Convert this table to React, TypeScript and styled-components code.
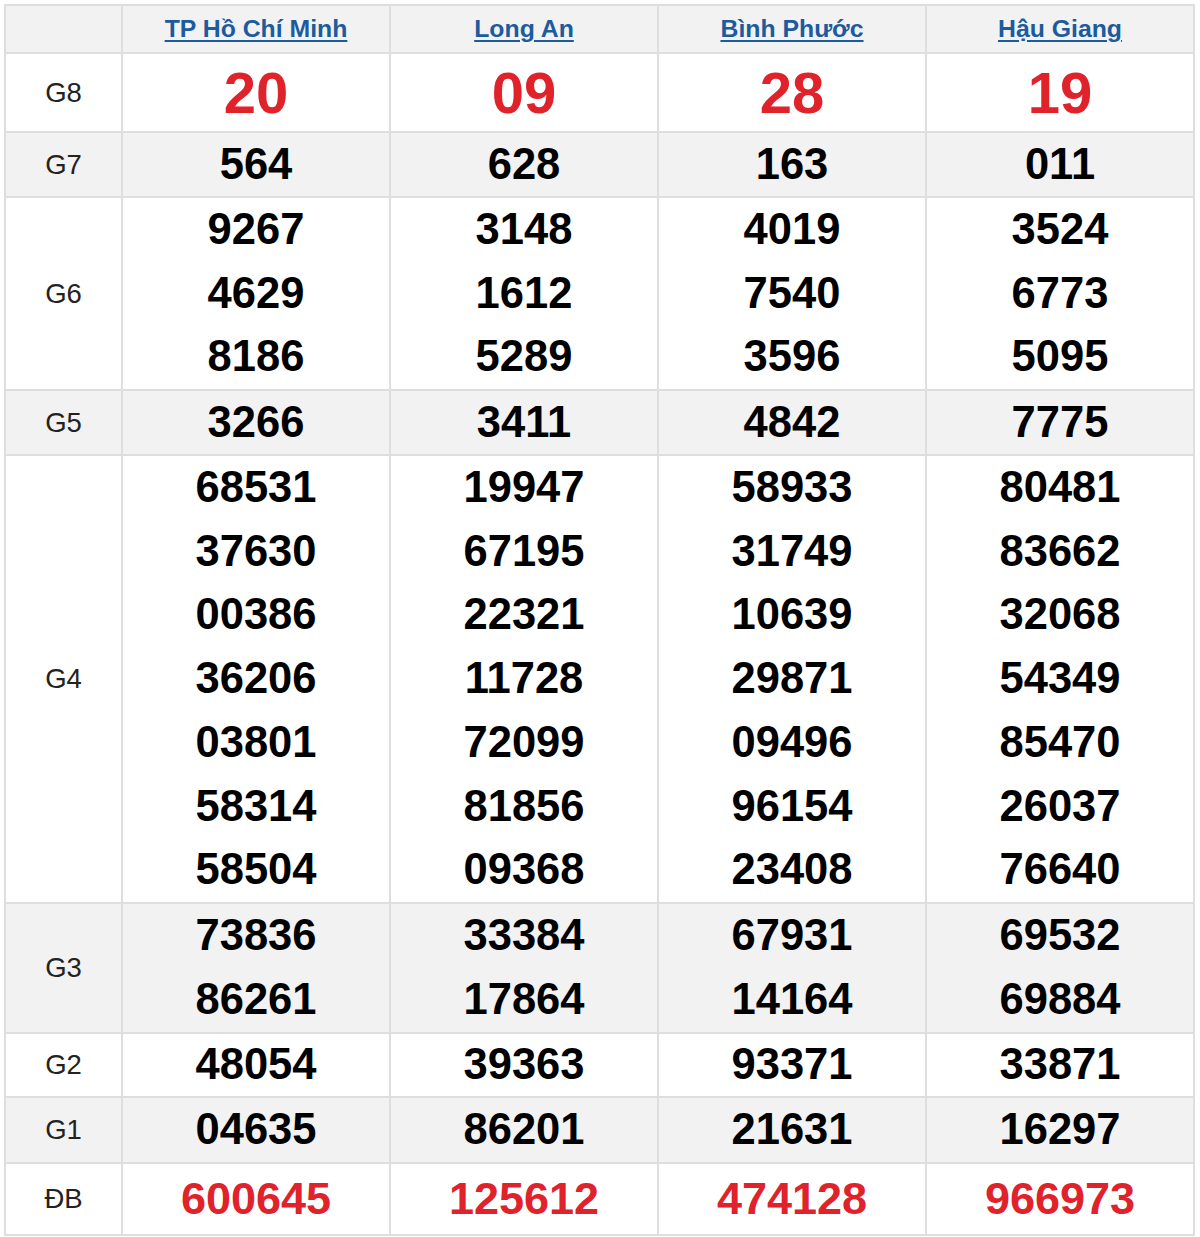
import React from "react";
import styled, { createGlobalStyle } from "styled-components";

const GlobalStyle = createGlobalStyle`
  html, body { margin: 0; padding: 0; background: #ffffff; }
  body { font-family: "Liberation Sans", Arial, sans-serif; }
`;

const Page = styled.div`
  padding: 4px 0 0 4px;
`;

const Board = styled.div`
  display: grid;
  grid-template-columns: 115px repeat(4, 266px);
  grid-template-rows: 46px 77px 63px 191px 63px 446px 128px 62px 64px 70px;
  gap: 2px;
  padding: 2px;
  width: max-content;
  background: #dedede;
`;

const Cell = styled.div<{ $alt?: boolean }>`
  background: ${(p) => (p.$alt ? "#f2f2f2" : "#ffffff")};
  display: flex;
  flex-direction: column;
  align-items: center;
  justify-content: center;
`;

const Label = styled(Cell)`
  font-size: 27.5px;
  color: #222222;
  font-family: "Liberation Sans", Arial, sans-serif;
`;

const ProvinceLink = styled.a`
  font-size: 24.8px;
  font-weight: bold;
  color: #1c5b9e;
  text-decoration: underline;
  text-underline-offset: 3px;
  text-decoration-thickness: 2px;
  font-family: "Liberation Sans", Arial, sans-serif;
`;

const Num = styled.div<{ $size: number; $red?: boolean }>`
  font-size: ${(p) => p.$size}px;
  font-weight: bold;
  line-height: 63.7px;
  color: ${(p) => (p.$red ? "#e0222b" : "#000000")};
  font-family: "Liberation Sans", Arial, sans-serif;
`;

const provinces = ["TP Hồ Chí Minh", "Long An", "Bình Phước", "Hậu Giang"];

type Prize = { label: string; size: number; red?: boolean; values: string[][] };

const prizes: Prize[] = [
  { label: "G8", size: 58, red: true, values: [["20"], ["09"], ["28"], ["19"]] },
  { label: "G7", size: 43.5, values: [["564"], ["628"], ["163"], ["011"]] },
  {
    label: "G6",
    size: 43.5,
    values: [
      ["9267", "4629", "8186"],
      ["3148", "1612", "5289"],
      ["4019", "7540", "3596"],
      ["3524", "6773", "5095"],
    ],
  },
  { label: "G5", size: 43.5, values: [["3266"], ["3411"], ["4842"], ["7775"]] },
  {
    label: "G4",
    size: 43.5,
    values: [
      ["68531", "37630", "00386", "36206", "03801", "58314", "58504"],
      ["19947", "67195", "22321", "11728", "72099", "81856", "09368"],
      ["58933", "31749", "10639", "29871", "09496", "96154", "23408"],
      ["80481", "83662", "32068", "54349", "85470", "26037", "76640"],
    ],
  },
  {
    label: "G3",
    size: 43.5,
    values: [
      ["73836", "86261"],
      ["33384", "17864"],
      ["67931", "14164"],
      ["69532", "69884"],
    ],
  },
  { label: "G2", size: 43.5, values: [["48054"], ["39363"], ["93371"], ["33871"]] },
  { label: "G1", size: 43.5, values: [["04635"], ["86201"], ["21631"], ["16297"]] },
  { label: "ĐB", size: 45, red: true, values: [["600645"], ["125612"], ["474128"], ["966973"]] },
];

export default function App() {
  return (
    <>
      <GlobalStyle />
      <Page>
        <Board>
          <Cell $alt />
          {provinces.map((p) => (
            <Cell $alt key={p}>
              <ProvinceLink href="#">{p}</ProvinceLink>
            </Cell>
          ))}
          {prizes.map((prize, i) => {
            const alt = i % 2 === 1;
            return (
              <React.Fragment key={prize.label}>
                <Label $alt={alt}>{prize.label}</Label>
                {prize.values.map((col, c) => (
                  <Cell $alt={alt} key={c}>
                    {col.map((v, k) => (
                      <Num key={k} $size={prize.size} $red={prize.red}>
                        {v}
                      </Num>
                    ))}
                  </Cell>
                ))}
              </React.Fragment>
            );
          })}
        </Board>
      </Page>
    </>
  );
}
